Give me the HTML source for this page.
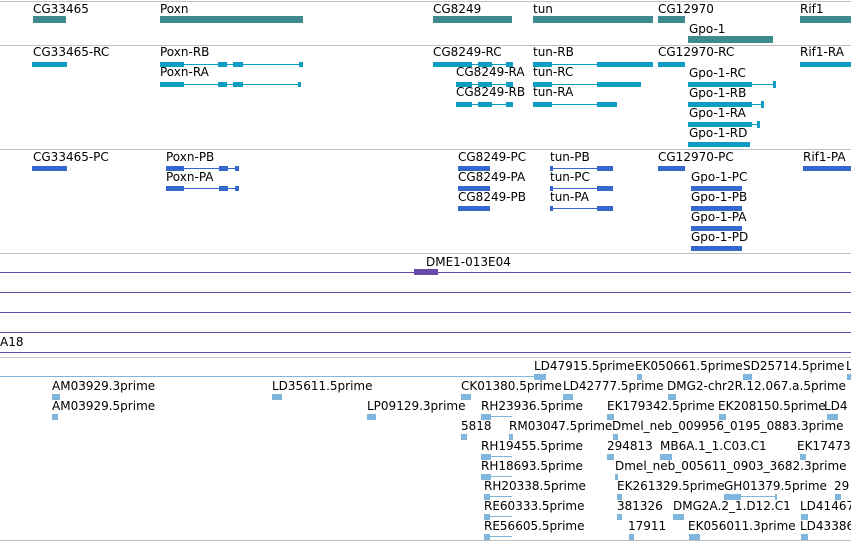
<!DOCTYPE html>
<html><head><meta charset="utf-8"><style>
body{margin:0;width:851px;height:541px;overflow:hidden;background:#fff;position:relative;font-family:"DejaVu Sans",sans-serif}
.t{position:absolute;font-size:12px;line-height:14px;white-space:nowrap;color:#000}
.h{position:absolute;height:1px;background:#c0c0c0;left:0;width:851px}
.p{position:absolute;height:1px;background:#6a4aa8;left:0;width:851px}
.g{position:absolute;background:#3d8b8f;height:7px}
.c{position:absolute;background:#0c9ec0}
.b{position:absolute;background:#3468cc}
.e{position:absolute;background:#7fb6de}
</style></head><body>
<div class="h" style="top:1px"></div>
<div class="h" style="top:45px"></div>
<div class="h" style="top:149px"></div>
<div class="h" style="top:253px"></div>
<div class="h" style="top:357px"></div>
<div class="h" style="top:540px"></div>

<div class="t" style="left:33px;top:2px">CG33465</div><div class="g" style="left:33px;top:16px;width:33px"></div>
<div class="t" style="left:160px;top:2px">Poxn</div><div class="g" style="left:160px;top:16px;width:143px"></div>
<div class="t" style="left:433px;top:2px">CG8249</div><div class="g" style="left:433px;top:16px;width:79px"></div>
<div class="t" style="left:533px;top:2px">tun</div><div class="g" style="left:533px;top:16px;width:120px"></div>
<div class="t" style="left:658px;top:2px">CG12970</div><div class="g" style="left:658px;top:16px;width:27px"></div>
<div class="t" style="left:689px;top:22px">Gpo-1</div><div class="g" style="left:688px;top:36px;width:85px"></div>
<div class="t" style="left:800px;top:2px">Rif1</div><div class="g" style="left:800px;top:16px;width:51px"></div>

<div class="t" style="left:33px;top:45px">CG33465-RC</div><div class="c" style="left:32px;top:62px;width:35px;height:5px"></div>
<div class="t" style="left:160px;top:45px">Poxn-RB</div><div class="c" style="left:160px;top:62px;width:24px;height:5px"></div><div class="c" style="left:184px;top:64px;width:119px;height:1px"></div><div class="c" style="left:218px;top:62px;width:9px;height:5px"></div><div class="c" style="left:233px;top:62px;width:10px;height:5px"></div><div class="c" style="left:299px;top:62px;width:4px;height:5px"></div>
<div class="t" style="left:160px;top:65px">Poxn-RA</div><div class="c" style="left:160px;top:82px;width:24px;height:5px"></div><div class="c" style="left:184px;top:84px;width:117px;height:1px"></div><div class="c" style="left:218px;top:82px;width:9px;height:5px"></div><div class="c" style="left:233px;top:82px;width:10px;height:5px"></div><div class="c" style="left:298px;top:82px;width:3px;height:5px"></div>
<div class="t" style="left:433px;top:45px">CG8249-RC</div><div class="c" style="left:433px;top:62px;width:39px;height:5px"></div><div class="c" style="left:472px;top:64px;width:41px;height:1px"></div><div class="c" style="left:478px;top:62px;width:14px;height:5px"></div><div class="c" style="left:506px;top:62px;width:7px;height:5px"></div>
<div class="t" style="left:456px;top:65px">CG8249-RA</div><div class="c" style="left:456px;top:82px;width:16px;height:5px"></div><div class="c" style="left:472px;top:84px;width:41px;height:1px"></div><div class="c" style="left:478px;top:82px;width:14px;height:5px"></div><div class="c" style="left:506px;top:82px;width:7px;height:5px"></div>
<div class="t" style="left:456px;top:85px">CG8249-RB</div><div class="c" style="left:456px;top:102px;width:16px;height:5px"></div><div class="c" style="left:472px;top:104px;width:41px;height:1px"></div><div class="c" style="left:478px;top:102px;width:14px;height:5px"></div><div class="c" style="left:506px;top:102px;width:7px;height:5px"></div>
<div class="t" style="left:533px;top:45px">tun-RB</div><div class="c" style="left:533px;top:62px;width:19px;height:5px"></div><div class="c" style="left:552px;top:64px;width:45px;height:1px"></div><div class="c" style="left:597px;top:62px;width:56px;height:5px"></div>
<div class="t" style="left:533px;top:65px">tun-RC</div><div class="c" style="left:533px;top:82px;width:19px;height:5px"></div><div class="c" style="left:552px;top:84px;width:45px;height:1px"></div><div class="c" style="left:597px;top:82px;width:44px;height:5px"></div>
<div class="t" style="left:533px;top:85px">tun-RA</div><div class="c" style="left:533px;top:102px;width:19px;height:5px"></div><div class="c" style="left:552px;top:104px;width:45px;height:1px"></div><div class="c" style="left:597px;top:102px;width:20px;height:5px"></div>
<div class="t" style="left:658px;top:45px">CG12970-RC</div><div class="c" style="left:658px;top:62px;width:27px;height:5px"></div>
<div class="t" style="left:689px;top:66px">Gpo-1-RC</div><div class="c" style="left:688px;top:84px;width:88px;height:1px"></div><div class="c" style="left:688px;top:82px;width:64px;height:5px"></div><div class="c" style="left:773px;top:81px;width:3px;height:7px"></div>
<div class="t" style="left:689px;top:86px">Gpo-1-RB</div><div class="c" style="left:688px;top:104px;width:76px;height:1px"></div><div class="c" style="left:688px;top:102px;width:64px;height:5px"></div><div class="c" style="left:761px;top:101px;width:3px;height:7px"></div>
<div class="t" style="left:689px;top:106px">Gpo-1-RA</div><div class="c" style="left:688px;top:124px;width:72px;height:1px"></div><div class="c" style="left:688px;top:122px;width:64px;height:5px"></div><div class="c" style="left:757px;top:121px;width:3px;height:7px"></div>
<div class="t" style="left:689px;top:126px">Gpo-1-RD</div><div class="c" style="left:688px;top:142px;width:62px;height:5px"></div>
<div class="t" style="left:800px;top:45px">Rif1-RA</div><div class="c" style="left:800px;top:62px;width:51px;height:5px"></div>

<div class="t" style="left:33px;top:150px">CG33465-PC</div><div class="b" style="left:32px;top:166px;width:35px;height:5px"></div>
<div class="t" style="left:166px;top:150px">Poxn-PB</div><div class="b" style="left:166px;top:166px;width:18px;height:5px"></div><div class="b" style="left:184px;top:168px;width:55px;height:1px"></div><div class="b" style="left:219px;top:166px;width:9px;height:5px"></div><div class="b" style="left:235px;top:166px;width:4px;height:5px"></div>
<div class="t" style="left:166px;top:170px">Poxn-PA</div><div class="b" style="left:166px;top:186px;width:18px;height:5px"></div><div class="b" style="left:184px;top:188px;width:55px;height:1px"></div><div class="b" style="left:219px;top:186px;width:9px;height:5px"></div><div class="b" style="left:235px;top:186px;width:4px;height:5px"></div>
<div class="t" style="left:458px;top:150px">CG8249-PC</div><div class="b" style="left:458px;top:166px;width:32px;height:5px"></div>
<div class="t" style="left:458px;top:170px">CG8249-PA</div><div class="b" style="left:458px;top:186px;width:32px;height:5px"></div>
<div class="t" style="left:458px;top:190px">CG8249-PB</div><div class="b" style="left:458px;top:206px;width:32px;height:5px"></div>
<div class="t" style="left:550px;top:150px">tun-PB</div><div class="b" style="left:550px;top:168px;width:63px;height:1px"></div><div class="b" style="left:550px;top:166px;width:3px;height:5px"></div><div class="b" style="left:597px;top:166px;width:16px;height:5px"></div>
<div class="t" style="left:550px;top:170px">tun-PC</div><div class="b" style="left:550px;top:188px;width:63px;height:1px"></div><div class="b" style="left:550px;top:186px;width:3px;height:5px"></div><div class="b" style="left:597px;top:186px;width:16px;height:5px"></div>
<div class="t" style="left:550px;top:190px">tun-PA</div><div class="b" style="left:550px;top:208px;width:63px;height:1px"></div><div class="b" style="left:550px;top:206px;width:3px;height:5px"></div><div class="b" style="left:597px;top:206px;width:16px;height:5px"></div>
<div class="t" style="left:658px;top:150px">CG12970-PC</div><div class="b" style="left:658px;top:166px;width:27px;height:5px"></div>
<div class="t" style="left:691px;top:170px">Gpo-1-PC</div><div class="b" style="left:691px;top:186px;width:51px;height:5px"></div>
<div class="t" style="left:691px;top:190px">Gpo-1-PB</div><div class="b" style="left:691px;top:206px;width:51px;height:5px"></div>
<div class="t" style="left:691px;top:210px">Gpo-1-PA</div><div class="b" style="left:691px;top:226px;width:51px;height:5px"></div>
<div class="t" style="left:691px;top:230px">Gpo-1-PD</div><div class="b" style="left:691px;top:246px;width:51px;height:5px"></div>
<div class="t" style="left:803px;top:150px">Rif1-PA</div><div class="b" style="left:803px;top:166px;width:48px;height:5px"></div>

<div class="t" style="left:426px;top:255px">DME1-013E04</div>
<div class="p" style="top:272px"></div><div class="p" style="top:292px;"></div><div class="p" style="top:312px"></div><div class="p" style="top:332px"></div><div class="p" style="top:352px"></div>
<div style="position:absolute;left:414px;top:269px;width:24px;height:6px;background:#6a4aa8"></div>
<div class="t" style="left:0;top:335px">A18</div>

<div class="e" style="left:0;top:376px;width:534px;height:1px"></div>
<div class="t" style="left:534px;top:359px">LD47915.5prime</div><div class="t" style="left:635px;top:359px">EK050661.5prime</div><div class="t" style="left:743px;top:359px">SD25714.5prime</div><div class="t" style="left:846px;top:359px">L</div>
<div class="e" style="left:534px;top:374px;width:12px;height:6px"></div><div class="e" style="left:637px;top:374px;width:5px;height:6px"></div><div class="e" style="left:743px;top:374px;width:9px;height:6px"></div><div class="e" style="left:847px;top:374px;width:4px;height:6px"></div>

<div class="t" style="left:52px;top:379px">AM03929.3prime</div><div class="t" style="left:272px;top:379px">LD35611.5prime</div><div class="t" style="left:461px;top:379px">CK01380.5prime</div><div class="t" style="left:563px;top:379px">LD42777.5prime</div><div class="t" style="left:667px;top:379px">DMG2-chr2R.12.067.a.5prime</div>
<div class="e" style="left:52px;top:394px;width:8px;height:6px"></div><div class="e" style="left:272px;top:394px;width:10px;height:6px"></div><div class="e" style="left:461px;top:394px;width:10px;height:6px"></div><div class="e" style="left:563px;top:394px;width:10px;height:6px"></div><div class="e" style="left:668px;top:394px;width:8px;height:6px"></div>

<div class="t" style="left:52px;top:399px">AM03929.5prime</div><div class="t" style="left:367px;top:399px">LP09129.3prime</div><div class="t" style="left:481px;top:399px">RH23936.5prime</div><div class="t" style="left:607px;top:399px">EK179342.5prime</div><div class="t" style="left:718px;top:399px">EK208150.5prime</div><div class="t" style="left:824px;top:399px">LD4</div>
<div class="e" style="left:52px;top:414px;width:6px;height:6px"></div><div class="e" style="left:367px;top:414px;width:9px;height:6px"></div><div class="e" style="left:481px;top:414px;width:10px;height:6px"></div><div class="e" style="left:491px;top:416px;width:21px;height:1px"></div><div class="e" style="left:607px;top:414px;width:7px;height:6px"></div><div class="e" style="left:719px;top:414px;width:7px;height:6px"></div><div class="e" style="left:827px;top:414px;width:11px;height:6px"></div>

<div class="t" style="left:461px;top:419px">5818</div><div class="t" style="left:509px;top:419px">RM03047.5prime</div><div class="t" style="left:612px;top:419px">Dmel_neb_009956_0195_0883.3prime</div>
<div class="e" style="left:461px;top:434px;width:6px;height:6px"></div><div class="e" style="left:509px;top:434px;width:4px;height:6px"></div><div class="e" style="left:613px;top:434px;width:5px;height:6px"></div>

<div class="t" style="left:481px;top:439px">RH19455.5prime</div><div class="t" style="left:607px;top:439px">294813</div><div class="t" style="left:660px;top:439px">MB6A.1_1.C03.C1</div><div class="t" style="left:797px;top:439px">EK17473</div>
<div class="e" style="left:481px;top:454px;width:10px;height:6px"></div><div class="e" style="left:491px;top:456px;width:21px;height:1px"></div><div class="e" style="left:607px;top:454px;width:7px;height:6px"></div><div class="e" style="left:660px;top:454px;width:12px;height:6px"></div><div class="e" style="left:800px;top:454px;width:6px;height:6px"></div>

<div class="t" style="left:481px;top:459px">RH18693.5prime</div><div class="t" style="left:615px;top:459px">Dmel_neb_005611_0903_3682.3prime</div>
<div class="e" style="left:481px;top:474px;width:10px;height:6px"></div><div class="e" style="left:491px;top:476px;width:21px;height:1px"></div><div class="e" style="left:615px;top:474px;width:3px;height:6px"></div>

<div class="t" style="left:484px;top:479px">RH20338.5prime</div><div class="t" style="left:617px;top:479px">EK261329.5prime</div><div class="t" style="left:724px;top:479px">GH01379.5prime</div><div class="t" style="left:834px;top:479px">29</div>
<div class="e" style="left:484px;top:494px;width:6px;height:6px"></div><div class="e" style="left:490px;top:496px;width:22px;height:1px"></div><div class="e" style="left:617px;top:494px;width:5px;height:6px"></div><div class="e" style="left:724px;top:494px;width:17px;height:6px"></div><div class="e" style="left:741px;top:496px;width:36px;height:1px"></div><div class="e" style="left:775px;top:494px;width:2px;height:6px"></div><div class="e" style="left:835px;top:494px;width:6px;height:6px"></div>

<div class="t" style="left:484px;top:499px">RE60333.5prime</div><div class="t" style="left:617px;top:499px">381326</div><div class="t" style="left:673px;top:499px">DMG2A.2_1.D12.C1</div><div class="t" style="left:800px;top:499px">LD41467</div>
<div class="e" style="left:484px;top:514px;width:6px;height:6px"></div><div class="e" style="left:490px;top:516px;width:22px;height:1px"></div><div class="e" style="left:617px;top:514px;width:5px;height:6px"></div><div class="e" style="left:673px;top:514px;width:11px;height:6px"></div><div class="e" style="left:801px;top:514px;width:7px;height:6px"></div>

<div class="t" style="left:484px;top:519px">RE56605.5prime</div><div class="t" style="left:628px;top:519px">17911</div><div class="t" style="left:688px;top:519px">EK056011.3prime</div><div class="t" style="left:800px;top:519px">LD43386</div>
<div class="e" style="left:484px;top:534px;width:6px;height:6px"></div><div class="e" style="left:490px;top:536px;width:22px;height:1px"></div><div class="e" style="left:629px;top:534px;width:5px;height:6px"></div><div class="e" style="left:689px;top:534px;width:11px;height:6px"></div><div class="e" style="left:801px;top:534px;width:7px;height:6px"></div>
</body></html>
